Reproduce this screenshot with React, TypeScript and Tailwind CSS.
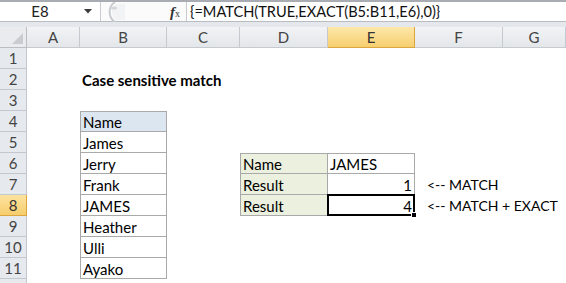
import React from "react";

const font = { fontFamily: "Lato, 'Liberation Sans', sans-serif" };

type C = { t?: React.ReactNode; cls?: string; sel?: boolean };

const blank: C = {};
const bd = "border-[#a9a9a9]";

function rowData(r: number): C[] {
  const cells: C[] = [blank, blank, blank, blank, blank, blank, blank];
  if (r === 2)
    cells[1] = { t: <span className="font-bold">Case sensitive match</span>, cls: "pl-[2px]" };
  const names: Record<number, string> = {
    4: "Name",
    5: "James",
    6: "Jerry",
    7: "Frank",
    8: "JAMES",
    9: "Heather",
    10: "Ulli",
    11: "Ayako",
  };
  if (names[r]) {
    cells[1] = {
      t: names[r],
      cls:
        `border-l border-r border-b ${bd} pl-[2px] ` +
        (r === 4 ? `border-t bg-[#dce6f1]` : ""),
    };
  }
  if (r === 6) {
    cells[3] = { t: "Name", cls: `border-l border-r border-b border-t ${bd} bg-[#ebf1de] pl-[2px]` };
    cells[4] = { t: "JAMES", cls: `border-r border-b border-t ${bd} pl-[2px]` };
  }
  if (r === 7) {
    cells[3] = { t: "Result", cls: `border-l border-r border-b ${bd} bg-[#ebf1de] pl-[2px]` };
    cells[4] = { t: "1", cls: `border-r border-b ${bd} justify-end pr-[2px]` };
    cells[5] = { t: "<-- MATCH", cls: "pl-[12px] text-[14px]" };
  }
  if (r === 8) {
    cells[3] = { t: "Result", cls: `border-l border-r border-b ${bd} bg-[#ebf1de] pl-[2px]` };
    cells[4] = { t: "4", cls: `border-r border-b ${bd} justify-end pr-[2px]`, sel: true };
    cells[5] = { t: "<-- MATCH + EXACT", cls: "pl-[12px] text-[14px]" };
  }
  return cells;
}

export default function App() {
  const cols = ["A", "B", "C", "D", "E", "F", "G"];
  const rows = [1, 2, 3, 4, 5, 6, 7, 8, 9, 10, 11, 12];
  return (
    <div
      className="w-[566px] h-[283px] overflow-hidden bg-white text-[15px] text-black relative"
      style={font}
    >
      {/* formula bar */}
      <div className="h-[27px] bg-[#e4e7eb] flex flex-col">
        <div className="h-[2px] bg-[#a9adb3]" />
        <div className="h-[20px] flex bg-white border-b border-[#b9bdc2]">
          <div className="w-[100px] relative flex items-center justify-center text-[#222]">
            <span className="pr-[20px]">E8</span>
            <svg className="absolute left-[84px] top-[7px]" width="8" height="5" viewBox="0 0 8 5">
              <path d="M0 0 L8 0 L4 4.5 Z" fill="#3c3c3c" />
            </svg>
          </div>
          <div className="w-[1px] bg-[#c8cbd0]" />
          <div className="w-[85px] relative flex items-center bg-[#fbfbfb]">
            <svg className="absolute left-[2px] top-[0px]" width="24" height="20" viewBox="0 0 24 20">
              <path d="M12 0 A12 12 0 0 0 12 20" fill="none" stroke="#c9ccd0" strokeWidth="2" />
              <path d="M13 2 A10 10 0 0 0 13 18 L22 18 L22 2 Z" fill="#f2f3f4" />
              <ellipse cx="11" cy="6" rx="3" ry="1.5" fill="#d4d6d9" />
            </svg>
            <span
              className="absolute left-[69px] top-[0px] italic font-bold text-[#333] text-[15px] leading-[20px]"
              style={{ fontFamily: "'Liberation Serif', serif" }}
            >
              f<span className="text-[10px] not-italic font-normal">x</span>
            </span>
          </div>
          <div className="w-[1px] bg-[#c8cbd0]" />
          <div className="flex-1 flex items-center pl-[3px] text-[#111] text-[14.6px] whitespace-nowrap">
            {"{=MATCH(TRUE,EXACT(B5:B11,E6),0)}"}
          </div>
        </div>
      </div>

      {/* grid */}
      <div className="grid grid-cols-[27px_53px_87px_73px_88px_87px_88px_63px]">
        <div className="h-[21px] bg-[#e9ebee] border-r border-b border-[#b9bec5] relative">
          <svg className="absolute right-[3px] bottom-[3px]" width="11" height="11" viewBox="0 0 11 11">
            <path d="M11 0 L11 11 L0 11 Z" fill="#c8ccd1" />
          </svg>
        </div>
        {cols.map((c) => (
          <div
            key={c}
            className={
              c === "E"
                ? "h-[21px] flex items-center justify-center bg-gradient-to-b from-[#fde7a8] to-[#f7cf6e] border-r border-b border-[#d9a640] text-[#333]"
                : "h-[21px] flex items-center justify-center bg-gradient-to-b from-[#f1f3f5] to-[#e4e7ea] border-r border-b border-[#c6cad0] text-[#444]"
            }
          >
            {c}
          </div>
        ))}

        {rows.map((r) => {
          const cells = rowData(r);
          return (
            <React.Fragment key={r}>
              <div
                className={
                  r === 8
                    ? "h-[21px] flex items-center justify-center bg-gradient-to-b from-[#fde3a0] to-[#f6cd6c] border-r border-b border-[#d9a640] text-[#333]"
                    : "h-[21px] flex items-center justify-center bg-[#e6e9ed] border-r border-b border-[#c3c8ce] text-[#444]"
                }
              >
                {r <= 11 ? r : ""}
              </div>
              {cells.map((cell, i) => (
                <div
                  key={i}
                  className={
                    "h-[21px] flex items-center whitespace-nowrap leading-[20px] pt-[1px] relative " +
                    (cell.cls ?? "")
                  }
                >
                  {cell.t}
                  {cell.sel && (
                    <>
                      <div className="absolute -left-[1px] -top-[1px] -right-[1px] -bottom-[1px] border-2 border-black" />
                      <div className="absolute -right-[3px] -bottom-[3px] w-[6px] h-[6px] bg-black border border-white" />
                    </>
                  )}
                </div>
              ))}
            </React.Fragment>
          );
        })}
      </div>
    </div>
  );
}
